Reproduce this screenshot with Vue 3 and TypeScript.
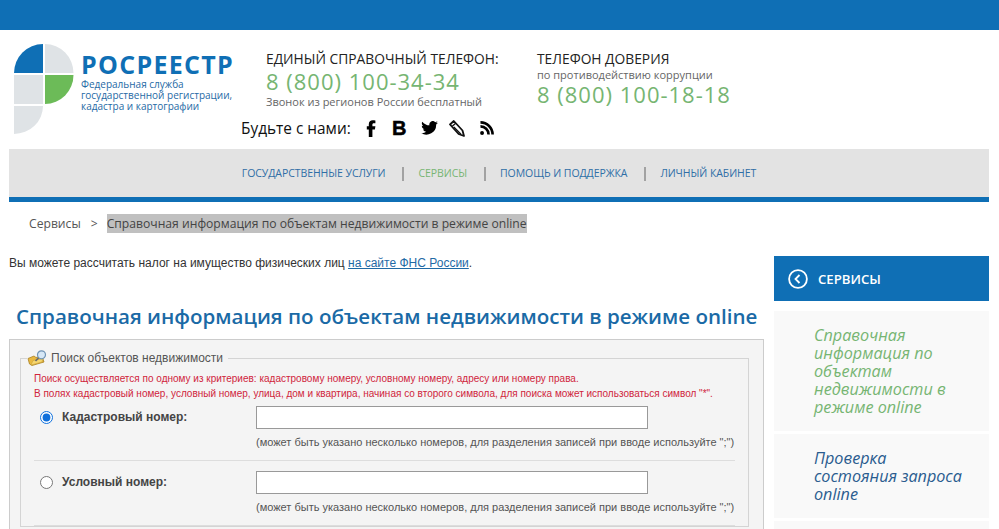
<script setup lang="ts">
const nav = [
  { text: 'ГОСУДАРСТВЕННЫЕ УСЛУГИ', active: false },
  { text: 'СЕРВИСЫ', active: true },
  { text: 'ПОМОЩЬ И ПОДДЕРЖКА', active: false },
  { text: 'ЛИЧНЫЙ КАБИНЕТ', active: false },
]
const rows = [
  { label: 'Кадастровый номер:', checked: true },
  { label: 'Условный номер:', checked: false },
]
const hint = '(может быть указано несколько номеров, для разделения записей при вводе используйте ";")'
const side = [
  { text: 'Справочная информация по объектам недвижимости в режиме online', active: true },
  { text: 'Проверка состояния запроса online', active: false },
]
</script>

<template>
  <div class="page">
    <div class="topbar"></div>
    <div class="wrap">
      <header class="header">
        <div class="logo">
          <svg class="mark" width="60" height="91" viewBox="0 0 60 91">
            <path d="M0 29A29 29 0 0 1 29 0V29Z" fill="#0f6fb5" />
            <path d="M31 0A28.5 29 0 0 1 59.500 29H31Z" fill="#dfe3e6" />
            <rect x="0" y="31" width="29" height="29" fill="#dfe3e6" />
            <path d="M31 31H59.500A28.500 29 0 0 1 31 60Z" fill="#6cbb58" />
            <path d="M0 62H29A29 28 0 0 1 0 90Z" fill="#dfe3e6" />
          </svg>
          <div class="logo-text">
            <div class="logo-name">РОСРЕЕСТР</div>
            <div class="logo-sub">Федеральная служба<br />государственной регистрации,<br />кадастра и картографии</div>
          </div>
        </div>
        <div class="contacts">
          <div class="phones">
            <div class="phone-a">
              <div class="ph-title">ЕДИНЫЙ СПРАВОЧНЫЙ ТЕЛЕФОН:</div>
              <div class="ph-num">8 (800) 100-34-34</div>
              <div class="ph-note">Звонок из регионов России бесплатный</div>
            </div>
            <div class="phone-b">
              <div class="ph-title">ТЕЛЕФОН ДОВЕРИЯ</div>
              <div class="ph-note tight">по противодействию коррупции</div>
              <div class="ph-num">8 (800) 100-18-18</div>
            </div>
          </div>
          <div class="social">
            <span class="social-label">Будьте с нами:</span>
            <svg class="ic ic-f" width="14" height="17" viewBox="0 0 14 17"><path d="M3.800 17V9.400H1.800V6.200h2V4.200C3.800 1.500 5.400.2 7.800.2c1.100 0 2.200.1 2.600.2v2.900H8.900c-1.200 0-1.500.6-1.500 1.400v1.500h3l-.5 3.200H7.400V17Z" fill="#000" /></svg>
            <span class="vk">B</span>
            <svg class="ic ic-t" width="17" height="14" viewBox="0 0 24 20"><path d="M24 2.400c-.9.400-1.800.7-2.800.8 1-.6 1.800-1.600 2.200-2.700-1 .6-2 1-3.100 1.200A4.900 4.900 0 0 0 11.900 6.200C7.800 6 4.200 4 1.700.9c-1.300 2.200-.6 5.100 1.500 6.600-.8 0-1.600-.2-2.200-.6 0 2.300 1.600 4.400 3.900 4.900-.7.200-1.500.2-2.200.1.600 2 2.400 3.400 4.600 3.400A9.900 9.900 0 0 1 0 17.300 14 14 0 0 0 21.500 5c1-.7 1.800-1.600 2.500-2.600Z" fill="#000" /></svg>
            <svg class="ic ic-p" width="16" height="17" viewBox="0 0 16 17"><path d="M1 4.500 4.800 1 13.500 10.500 15 16 9.600 14Z" fill="#fff" stroke="#111" stroke-width="1.800" stroke-linejoin="round" /><path d="M3.300 6.300 7 3M4.800 7 12 14.300" fill="none" stroke="#111" stroke-width="1.300" /></svg>
            <svg class="ic-r" width="14" height="14" viewBox="0 0 15 15"><circle cx="2.200" cy="12.800" r="2.100" fill="#000" /><path d="M.5 5.800a8.700 8.700 0 0 1 8.700 8.700M.5 1.500a13 13 0 0 1 13 13" fill="none" stroke="#000" stroke-width="2.800" /></svg>
          </div>
        </div>
      </header>

      <nav class="nav">
        <template v-for="(n, i) in nav" :key="n.text">
          <span v-if="i > 0" class="sep"></span>
          <a class="nav-link" :class="{ on: n.active }">{{ n.text }}</a>
        </template>
      </nav>

      <div class="crumbs">
        <span>Сервисы</span>
        <span class="gt">&gt;</span>
        <span class="cur">Справочная информация по объектам недвижимости в режиме online</span>
      </div>

      <div class="main">
        <div class="content">
          <p class="tax">Вы можете рассчитать налог на имущество физических лиц <a class="tax-link">на сайте ФНС России</a>.</p>
          <h1 class="title">Справочная информация по объектам недвижимости в режиме online</h1>
          <div class="panel">
            <fieldset class="set">
              <legend class="legend">
                <svg width="20" height="16" viewBox="0 0 20 16">
                  <path d="M1 8.500 7 6 9 7.500 15 6 17 12 5 15.500 2.500 14Z" fill="#e9b840" stroke="#a88124" stroke-width=".8" />
                  <path d="M4 15 6 10.500 16 8.500 15 12Z" fill="#f6d66f" stroke="#c29a35" stroke-width=".5" />
                  <circle cx="14.500" cy="4.800" r="4" fill="#d6e7f6" stroke="#6f93b5" stroke-width="1.200" />
                  <path d="M11.500 8 8.500 11" stroke="#6b6b6b" stroke-width="1.700" />
                </svg>
                <span>Поиск объектов недвижимости</span>
              </legend>
              <div class="warn">
                <div>Поиск осуществляется по одному из критериев: кадастровому номеру, условному номеру, адресу или номеру права.</div>
                <div>В полях кадастровый номер, условный номер, улица, дом и квартира, начиная со второго символа, для поиска может использоваться символ "*".</div>
              </div>
              <div v-for="r in rows" :key="r.label" class="row">
                <label class="row-label">
                  <input class="radio" type="radio" name="mode" :checked="r.checked" />
                  <span>{{ r.label }}</span>
                </label>
                <div class="field">
                  <input class="text" type="text" />
                  <div class="hint">{{ hint }}</div>
                </div>
              </div>
            </fieldset>
          </div>
        </div>

        <aside class="aside">
          <div class="aside-head">
            <svg width="20" height="20" viewBox="0 0 20 20"><circle cx="10" cy="10" r="8.900" fill="none" stroke="#fff" stroke-width="1.800" /><path d="M11.500 6 7.500 10l4 4" fill="none" stroke="#fff" stroke-width="1.800" /></svg>
            <span>СЕРВИСЫ</span>
          </div>
          <div v-for="s in side" :key="s.text" class="side-item" :class="{ on: s.active }">{{ s.text }}</div>
          <div class="side-item stub"></div>
        </aside>
      </div>
    </div>
  </div>
</template>

<style>
html, body { margin: 0; overflow: hidden; background: #fff; }
</style>

<style scoped>
.page { height: 529px; overflow: hidden; font-family: "Open Sans", sans-serif; color: #222; }
.topbar { height: 30px; background: #0f6fb5; }
.wrap { padding: 0 10px 0 9px; }

.header { height: 119px; display: flex; }
.logo { width: 232px; display: flex; padding: 14px 0 0 5px; box-sizing: border-box; }
.mark { flex: none; }
.logo-text { margin-left: 7px; }
.logo-name { font-size: 25px; line-height: 24px; margin-top: 8px; font-weight: 700; color: #0f6fb5; letter-spacing: 1.300px; }
.logo-sub { font-size: 10px; line-height: 11px; margin-top: 3px; color: #1f6aa5; white-space: nowrap; }

.contacts { flex: 1; }
.phones { display: flex; padding: 20px 0 0 25px; height: 66px; }
.phone-a { width: 271px; }
.ph-title { font-size: 13.800px; line-height: 18px; color: #222; white-space: nowrap; }
.ph-num { font-size: 22px; line-height: 28px; margin-top: -1px; color: #76b572; letter-spacing: 1px; white-space: nowrap; }
.ph-note { font-size: 11px; line-height: 14px; color: #666; white-space: nowrap; }
.tight { line-height: 13px; }
.social { display: flex; align-items: center; height: 20px; margin-top: 2px; }
.social-label { font-size: 15.400px; color: #111; width: 124px; }
.ic { flex: none; }
.ic-f { margin-right: 13px; }
.ic-t { margin-right: 11px; }
.ic-p { margin-right: 15px; }
.ic-r { flex: none; }
.vk { font-family: "Liberation Sans", sans-serif; font-weight: 700; font-size: 20px; -webkit-text-stroke: 0.5px #000; color: #000; margin-right: 15px; }

.nav { height: 48px; background: #e3e3e3; border-bottom: 5px solid #0f6fb5; display: flex; align-items: center; justify-content: center; font-size: 10.500px; letter-spacing: -0.070px; }
.nav-link { color: #2f6ea6; }
.nav-link.on { color: #77b573; }
.sep { width: 2px; height: 14px; background: #a2a2a2; margin: 2px 14px 0 17px; }

.crumbs { padding: 13px 0 0 20px; font-size: 12.150px; line-height: 18px; color: #555; height: 23px; }
.gt { margin: 0 9px 0 10px; }
.cur { background: #c0c0c0; color: #444; padding: 1px 0; }

.main { display: flex; gap: 10px; padding-top: 18px; }
.content { width: 755px; flex: none; }
.tax { margin: 0; font-family: "Liberation Sans", sans-serif; font-size: 12px; line-height: 14px; color: #333; }
.tax-link { color: #1f6aa5; text-decoration: underline; }
.title { margin: 32px 0 0 7px; font-size: 20.550px; line-height: 28px; font-weight: 600; color: #1a6aa6; white-space: nowrap; }
.panel { margin-top: 9px; background: #f4f4f4; border: 1px solid #ccc; padding: 10px 14px 20px 10px; font-family: "Liberation Sans", sans-serif; }
.set { margin: 0; padding: 0 13px; border: 1px solid #d4d4d4; min-width: 0; }
.legend { padding: 0 5px 0 0; margin-left: -7px; display: flex; align-items: center; gap: 4px; font-size: 12px; color: #555; }
.warn { font-size: 10px; line-height: 15px; color: #d0253c; padding-top: 5px; margin-bottom: -5px; }
.row { display: flex; border-bottom: 1px solid #ddd; padding: 10px 0 12px; }
.row-label { width: 222px; display: flex; align-items: flex-start; font-size: 12px; font-weight: 700; color: #444; padding: 4px 0 0 6px; box-sizing: border-box; }
.radio { margin: 1px 9px 0 0; width: 13px; height: 13px; accent-color: #0f6fdb; }
.field { flex: 1; }
.text { display: block; width: 392px; height: 23px; box-sizing: border-box; border: 1px solid #999; background: #fff; }
.hint { font-size: 11px; line-height: 12px; color: #555; margin-top: 7px; white-space: nowrap; }

.aside { width: 215px; flex: none; }
.aside-head { height: 45px; background: #0f6fb5; display: flex; align-items: center; gap: 10px; padding-left: 14px; color: #fff; font-size: 13.200px; font-weight: 600; margin-bottom: 10px; }
.side-item { background: #f9f9f9; padding: 15px 20px 15px 40px; margin-bottom: 3px; font-size: 16.200px; line-height: 18px; font-style: italic; color: #2a5c8f; }
.side-item.on { color: #76b572; }
.stub { height: 40px; }
</style>
